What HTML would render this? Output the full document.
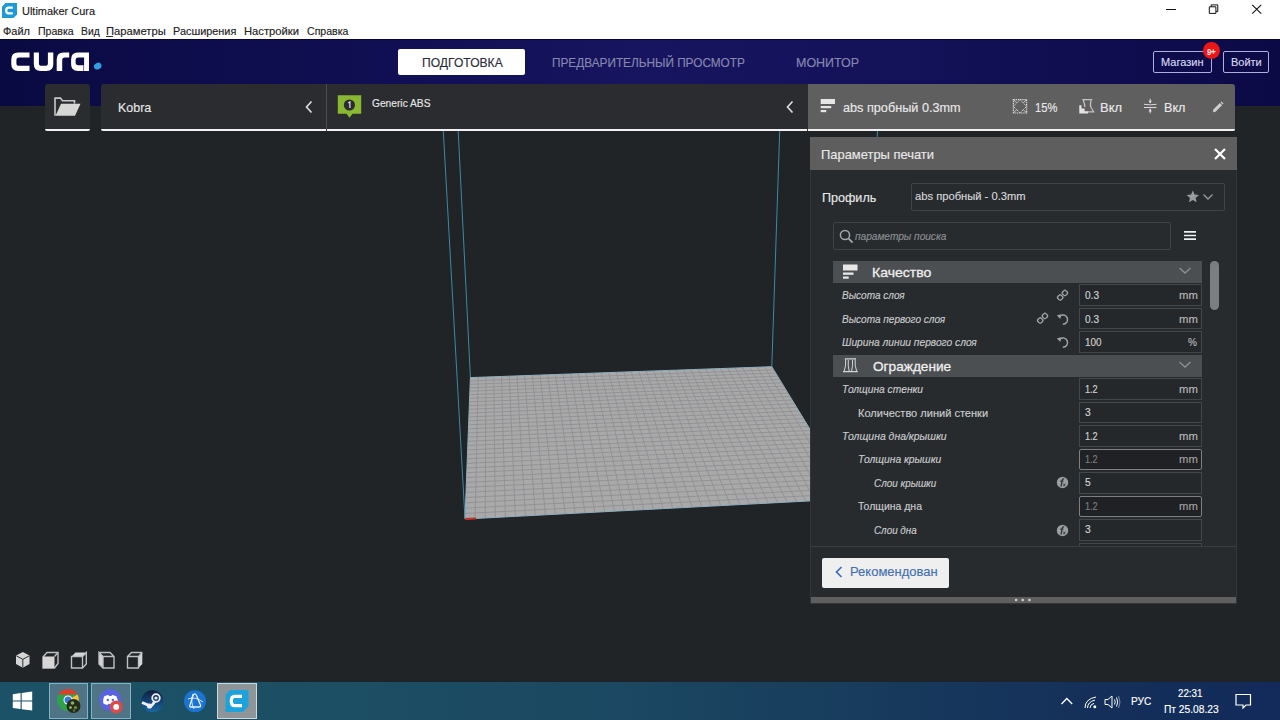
<!DOCTYPE html>
<html><head><meta charset="utf-8">
<style>
*{margin:0;padding:0;box-sizing:border-box}
html,body{width:1280px;height:720px;overflow:hidden;background:#212528;font-family:"Liberation Sans",sans-serif}
.abs{position:absolute}
.t{position:absolute;white-space:nowrap;line-height:1;transform-origin:0 0;-webkit-text-stroke:0.15px currentColor}
.sec{position:absolute;top:84px;height:47px;background:#2a2c2f;border-radius:3px 3px 0 0}
.field{position:absolute;left:1078.6px;width:123.4px;height:22px;background:#25282b;border:1px solid #44474a}
.field.dis{background:#1f2124;border-color:#7d7f82;border-radius:2px}
</style></head><body>
<!-- title + menu -->
<div class="abs" style="left:0;top:0;width:1280px;height:39px;background:#fff"></div>
<svg class="abs" style="left:2px;top:3px" width="15" height="15" viewBox="0 0 15 15"><path d="M3.5 0H15V11.5L11.5 15H0V3.5Z" fill="#1d9ad6"/><path d="M10.8 4.6H6.6Q4.2 4.6 4.2 7.5Q4.2 10.4 6.6 10.4H10.8" fill="none" stroke="#fff" stroke-width="2.3"/></svg>
<div class="abs" style="left:106px;top:36px;width:7px;height:1px;background:#333"></div>
<svg class="abs" style="left:1150px;top:0" width="130" height="21"><path d="M16 9.5H26" stroke="#111" stroke-width="1"/><path d="M59.3 6.8h6.6v6.6h-6.6z M61.2 6.8v-1.9h6.6v6.6h-1.9" fill="none" stroke="#111" stroke-width="1"/><path d="M102.2 4.8l9 8.8 M111.2 4.8l-9 8.8" stroke="#111" stroke-width="1.1"/></svg>
<!-- header -->
<div class="abs" style="left:0;top:39px;width:1280px;height:67px;background:linear-gradient(90deg,#0a0a42 0%,#0d0c4a 12%,#100f53 30%,#17155f 50%,#141259 68%,#0f0d4f 88%,#0b0a45 100%)"></div>
<div class="abs" style="left:0;top:39px;width:1280px;height:1px;background:#050530"></div>
<!-- cura logo -->
<svg class="abs" style="left:0;top:0" width="110" height="80" viewBox="0 0 110 80">
<g fill="#fff" fill-rule="evenodd">
<path d="M29.5 52.4H18Q11.3 52.4 11.3 59.2V64.2Q11.3 70.9 18 70.9H29.5V65.8H19Q16.4 65.8 16.4 63.2V60.1Q16.4 57.4 19 57.4H29.5Z"/>
<path d="M33.8 52.4H38.9V63.2Q38.9 65.8 41.5 65.8H45.3Q47.9 65.8 47.9 63.2V52.4H53.3V64.2Q53.3 70.9 46.5 70.9H40.6Q33.8 70.9 33.8 64.2Z"/>
<path d="M56.7 70.9V59.2Q56.7 52.4 63.4 52.4H69.2V57.4H64.8Q62.2 57.4 62.2 60V70.9Z"/>
<path d="M77.8 52.4H89V70.9H77.8Q71.1 70.9 71.1 64.2V59.2Q71.1 52.4 77.8 52.4Z M84.1 57.4H78.3Q75.6 57.4 75.6 60.1V62.6Q75.6 65.3 78.3 65.3H84.1Z"/>
</g>
<path d="M83.6 65.3V70.9" stroke="#0d0c4a" stroke-width="0.6"/>
<ellipse cx="97.7" cy="66.1" rx="3.9" ry="3.2" transform="rotate(-25 97.7 66.1)" fill="#2f9fe2"/>
</svg>
<!-- tabs -->
<div class="abs" style="left:398px;top:49px;width:127px;height:26px;background:#fff;border-radius:2px"></div>
<div class="abs" style="left:1153px;top:50.5px;width:58.5px;height:22.5px;border:1.5px solid #aeaee0;border-radius:2px"></div>
<div class="abs" style="left:1222.8px;top:50.5px;width:46px;height:22.5px;border:1.5px solid #aeaee0;border-radius:2px"></div>
<div class="abs" style="left:1203.2px;top:42.3px;width:16.8px;height:16.8px;background:#ec1616;border-radius:50%"></div>
<!-- viewport -->
<div class="abs" style="left:0;top:106px;width:1280px;height:576px;background:#202427"></div>
<svg class="abs" style="left:0;top:0" width="1280" height="720" viewBox="0 0 1280 720">
<g stroke="#3d8aa6" stroke-width="1" fill="none">
<line x1="443.3" y1="131" x2="465" y2="519"/>
<line x1="458.2" y1="131" x2="470.4" y2="377.6"/>
<line x1="779.7" y1="131" x2="771.8" y2="366.7"/>
<line x1="877.6" y1="131" x2="852.4" y2="498.7"/>
</g>
<polygon points="470.4,377.6 771.8,366.7 852.4,498.7 465.0,519.0" fill="#a9a9aa" stroke="#8fb0c0" stroke-width="1"/>
<g stroke="#8e8e90" stroke-width="0.8">
<line x1="478.20" y1="377.32" x2="475.12" y2="518.47"/>
<line x1="485.98" y1="377.04" x2="485.23" y2="517.94"/>
<line x1="493.75" y1="376.76" x2="495.30" y2="517.41"/>
<line x1="501.51" y1="376.47" x2="505.36" y2="516.89"/>
<line x1="509.25" y1="376.19" x2="515.39" y2="516.36"/>
<line x1="516.98" y1="375.92" x2="525.40" y2="515.84"/>
<line x1="524.70" y1="375.64" x2="535.38" y2="515.31"/>
<line x1="532.40" y1="375.36" x2="545.34" y2="514.79"/>
<line x1="540.09" y1="375.08" x2="555.28" y2="514.27"/>
<line x1="547.76" y1="374.80" x2="565.20" y2="513.75"/>
<line x1="555.42" y1="374.53" x2="575.09" y2="513.23"/>
<line x1="563.07" y1="374.25" x2="584.96" y2="512.71"/>
<line x1="570.70" y1="373.97" x2="594.81" y2="512.20"/>
<line x1="578.32" y1="373.70" x2="604.63" y2="511.68"/>
<line x1="585.93" y1="373.42" x2="614.44" y2="511.17"/>
<line x1="593.52" y1="373.15" x2="624.22" y2="510.66"/>
<line x1="601.10" y1="372.87" x2="633.97" y2="510.15"/>
<line x1="608.67" y1="372.60" x2="643.71" y2="509.64"/>
<line x1="616.22" y1="372.33" x2="653.42" y2="509.13"/>
<line x1="623.76" y1="372.05" x2="663.11" y2="508.62"/>
<line x1="631.29" y1="371.78" x2="672.78" y2="508.11"/>
<line x1="638.80" y1="371.51" x2="682.43" y2="507.61"/>
<line x1="646.30" y1="371.24" x2="692.05" y2="507.10"/>
<line x1="653.78" y1="370.97" x2="701.66" y2="506.60"/>
<line x1="661.26" y1="370.70" x2="711.24" y2="506.10"/>
<line x1="668.72" y1="370.43" x2="720.80" y2="505.60"/>
<line x1="676.16" y1="370.16" x2="730.34" y2="505.10"/>
<line x1="683.60" y1="369.89" x2="739.85" y2="504.60"/>
<line x1="691.02" y1="369.62" x2="749.35" y2="504.10"/>
<line x1="698.43" y1="369.35" x2="758.82" y2="503.60"/>
<line x1="705.82" y1="369.09" x2="768.27" y2="503.11"/>
<line x1="713.20" y1="368.82" x2="777.71" y2="502.61"/>
<line x1="720.57" y1="368.55" x2="787.12" y2="502.12"/>
<line x1="727.93" y1="368.29" x2="796.50" y2="501.63"/>
<line x1="735.27" y1="368.02" x2="805.87" y2="501.14"/>
<line x1="742.60" y1="367.76" x2="815.22" y2="500.65"/>
<line x1="749.92" y1="367.49" x2="824.55" y2="500.16"/>
<line x1="757.23" y1="367.23" x2="833.85" y2="499.67"/>
<line x1="764.52" y1="366.96" x2="843.14" y2="499.19"/>
<line x1="470.27" y1="380.92" x2="773.71" y2="369.84"/>
<line x1="470.14" y1="384.30" x2="775.65" y2="373.01"/>
<line x1="470.01" y1="387.72" x2="777.62" y2="376.23"/>
<line x1="469.88" y1="391.18" x2="779.62" y2="379.50"/>
<line x1="469.75" y1="394.70" x2="781.64" y2="382.81"/>
<line x1="469.61" y1="398.27" x2="783.69" y2="386.17"/>
<line x1="469.47" y1="401.89" x2="785.77" y2="389.57"/>
<line x1="469.33" y1="405.57" x2="787.87" y2="393.03"/>
<line x1="469.19" y1="409.30" x2="790.01" y2="396.53"/>
<line x1="469.04" y1="413.08" x2="792.18" y2="400.08"/>
<line x1="468.90" y1="416.93" x2="794.38" y2="403.68"/>
<line x1="468.75" y1="420.83" x2="796.62" y2="407.34"/>
<line x1="468.60" y1="424.79" x2="798.88" y2="411.05"/>
<line x1="468.44" y1="428.81" x2="801.18" y2="414.82"/>
<line x1="468.29" y1="432.89" x2="803.51" y2="418.64"/>
<line x1="468.13" y1="437.04" x2="805.88" y2="422.52"/>
<line x1="467.97" y1="441.25" x2="808.29" y2="426.46"/>
<line x1="467.81" y1="445.53" x2="810.73" y2="430.45"/>
<line x1="467.64" y1="449.88" x2="813.21" y2="434.51"/>
<line x1="467.47" y1="454.30" x2="815.72" y2="438.64"/>
<line x1="467.30" y1="458.79" x2="818.28" y2="442.82"/>
<line x1="467.13" y1="463.35" x2="820.88" y2="447.08"/>
<line x1="466.95" y1="467.99" x2="823.52" y2="451.40"/>
<line x1="466.77" y1="472.71" x2="826.20" y2="455.79"/>
<line x1="466.58" y1="477.51" x2="828.92" y2="460.25"/>
<line x1="466.40" y1="482.39" x2="831.69" y2="464.78"/>
<line x1="466.21" y1="487.35" x2="834.50" y2="469.39"/>
<line x1="466.02" y1="492.40" x2="837.36" y2="474.07"/>
<line x1="465.82" y1="497.53" x2="840.27" y2="478.83"/>
<line x1="465.62" y1="502.76" x2="843.23" y2="483.67"/>
<line x1="465.42" y1="508.08" x2="846.23" y2="488.60"/>
<line x1="465.21" y1="513.49" x2="849.29" y2="493.61"/>
</g>
<line x1="465" y1="519" x2="476" y2="518.4" stroke="#c0302a" stroke-width="2"/>
</svg>
<!-- top bar -->
<div class="sec" style="left:45px;width:45px"></div>
<div class="sec" style="left:101px;width:225.5px;border-radius:3px 0 0 0"></div>
<div class="sec" style="left:327px;width:480.5px;border-radius:0"></div>
<div class="sec" style="left:807.5px;width:427.5px;background:#5f5f5f;border-radius:0 3px 0 0"></div>
<div class="abs" style="left:326px;top:84px;width:1px;height:47px;background:#4a4c4f"></div>
<div class="abs" style="left:45px;top:128.5px;width:45px;height:2.5px;background:#f2f2f2;border-radius:0 0 3px 3px"></div>
<div class="abs" style="left:101px;top:128.5px;width:1134px;height:2.5px;background:#f2f2f2;border-radius:0 0 3px 3px"></div>
<div class="abs" style="left:326px;top:128.5px;width:1px;height:2.5px;background:#3a3c3f"></div>
<div class="abs" style="left:807px;top:128.5px;width:1px;height:2.5px;background:#3a3c3f"></div>
<!-- folder icon -->
<svg class="abs" style="left:54px;top:96.5px" width="28" height="23.5" viewBox="0 0 28 22" preserveAspectRatio="none"><path d="M1 17.5V1H6.5L8.5 3.5H20.5V6" fill="none" stroke="#c8c8c8" stroke-width="1.6"/><path d="M1.5 17.5L7 6.3H26.5L21 17.5Z" fill="#d6d6d6"/></svg>
<!-- chevrons -->
<svg class="abs" style="left:304px;top:100px" width="10" height="14"><path d="M7.5 1.5L2.5 7L7.5 12.5" fill="none" stroke="#e0e0e0" stroke-width="1.6"/></svg>
<svg class="abs" style="left:785px;top:100px" width="10" height="14"><path d="M7.5 1.5L2.5 7L7.5 12.5" fill="none" stroke="#e0e0e0" stroke-width="1.6"/></svg>
<!-- green badge -->
<svg class="abs" style="left:337px;top:95px" width="25" height="23" viewBox="0 0 25 23"><path d="M0.8 0.3H24.2V18.7H15.5L12.5 22.7L9.5 18.7H0.8Z" fill="#8ab832"/><circle cx="12.4" cy="10" r="5.6" fill="#2a2c2f"/><path d="M11.2 8L12.9 7V13" fill="none" stroke="#d8d8d8" stroke-width="1.3"/></svg>
<!-- quality icon -->
<svg class="abs" style="left:820px;top:98px" width="16" height="16"><rect x="0.7" y="1" width="14.3" height="5" fill="#e6e6e6"/><rect x="0.7" y="8" width="10.5" height="2.2" fill="#e6e6e6"/><rect x="0.7" y="12" width="5.5" height="2.2" fill="#e6e6e6"/></svg>
<!-- infill icon -->
<svg class="abs" style="left:0;top:0" width="1280" height="130" viewBox="0 0 1280 130">
<g fill="none" stroke="#d4d4d4">
<rect x="1013.4" y="99.6" width="13.2" height="13.4" stroke-width="1.2" stroke-dasharray="1.4 0.8"/>
<path d="M1013.4 106.3L1020 99.6L1026.6 106.3L1020 113Z" stroke-width="1" stroke-dasharray="1.4 0.8"/>
<path d="M1013.4 99.6L1016.7 103 M1026.6 99.6L1023.3 103 M1013.4 113L1016.7 109.6 M1026.6 113L1023.3 109.6" stroke-width="0.9"/>
</g>
<path d="M1082.2 99.6H1092.2 M1083.6 100V101.5Q1085 104 1084.8 107" fill="none" stroke="#c4c4c4" stroke-width="1.3"/>
<path d="M1091.2 100.2Q1089.6 104.5 1091 107.5Q1093 110.5 1093.6 111.8H1087.5" fill="none" stroke="#c4c4c4" stroke-width="1.2"/>
<path d="M1079.3 113.6V105.2H1081.5V108.6H1084.6V111.2H1088V113.6Z" fill="#e4e4e4"/>
<g fill="none" stroke="#d8d8d8">
<path d="M1144 104.3Q1150.2 105.3 1156.5 104.3" stroke-width="1"/>
<path d="M1144 107.5H1156.5" stroke-width="1.1"/>
<path d="M1150.2 98.8V103" stroke-width="1"/>
<path d="M1150.2 108.8V113.3" stroke-width="1"/>
</g>
<path d="M1148.6 100.8H1151.8L1150.2 103.6Z M1148.6 111.4H1151.8L1150.2 108.6Z" fill="#e0e0e0"/>
</svg>
<!-- pencil -->
<svg class="abs" style="left:1212px;top:101px" width="12" height="12" viewBox="0 0 12 12"><path d="M1 11.2L1.4 8.6L7.9 2.1L10 4.2L3.5 10.7Z" fill="#d0d0d0"/><path d="M8.6 1.4L9.5 0.6L11.5 2.6L10.7 3.5Z" fill="#d0d0d0"/></svg>

<!-- panel -->
<div class="abs" style="left:810px;top:137px;width:426.5px;height:466.5px;background:#272b2e;border:1px solid #34373a"></div>
<div class="abs" style="left:810px;top:137px;width:426.5px;height:33px;background:#5e5e5e"></div>
<svg class="abs" style="left:1213px;top:147px" width="14" height="14"><path d="M2 2L12 12 M12 2L2 12" stroke="#fff" stroke-width="2.2"/></svg>
<div class="abs" style="left:910.5px;top:183.3px;width:314px;height:27.5px;border:1px solid #414447;border-radius:2px"></div>
<svg class="abs" style="left:1186px;top:190px" width="14" height="13" viewBox="0 0 14 13"><path d="M6.8 0.5L8.5 4.6L13 5L9.6 7.9L10.7 12.3L6.8 10L2.9 12.3L4 7.9L0.6 5L5.1 4.6Z" fill="#9a9b9d"/></svg>
<svg class="abs" style="left:1202px;top:193px" width="13" height="9"><path d="M1.5 1.5L6 6L10.5 1.5" fill="none" stroke="#9a9a9a" stroke-width="1.3"/></svg>
<div class="abs" style="left:833.3px;top:221.5px;width:337.5px;height:28px;border:1px solid #414447;border-radius:2px"></div>
<svg class="abs" style="left:839px;top:229px" width="16" height="16" viewBox="0 0 16 16"><circle cx="6" cy="6" r="4.6" fill="none" stroke="#a6a7a9" stroke-width="1.5"/><path d="M9.4 9.4L13.6 13.6" stroke="#a6a7a9" stroke-width="1.8"/></svg>
<svg class="abs" style="left:1183px;top:229px" width="14" height="13"><path d="M1 2.8H13 M1 6.5H13 M1 10.2H13" stroke="#efefef" stroke-width="1.7"/></svg>
<!-- settings list -->
<div class="abs" style="left:833px;top:260.5px;width:369px;height:22.5px;background:#4c4f52"></div>
<div class="abs" style="left:833px;top:354.5px;width:369px;height:22.5px;background:#4c4f52"></div>
<svg class="abs" style="left:842px;top:263px" width="17" height="17"><rect x="1" y="1.5" width="14.5" height="6" fill="#e8e8e8"/><rect x="1" y="9.5" width="10.5" height="2.3" fill="#e8e8e8"/><rect x="1" y="13.5" width="5.7" height="2.2" fill="#e8e8e8"/></svg>
<svg class="abs" style="left:0;top:0" width="870" height="380" viewBox="0 0 870 380"><g fill="none" stroke="#d4d4d4"><path d="M844.8 358.8H856 M843 371.6H857.8" stroke-width="1.3"/><path d="M845.6 359.3Q846.3 365 844.2 371.2 M848.3 360Q847.8 366 849.2 371.2 M855.2 359.3Q854.5 365 856.6 371.2 M852.5 360Q853 366 851.6 371.2" stroke-width="1"/></g></svg>
<svg class="abs" style="left:1178px;top:266px" width="14" height="10"><path d="M1.5 2L7 7L12.5 2" fill="none" stroke="#8e9092" stroke-width="1.3"/></svg>
<svg class="abs" style="left:1178px;top:360px" width="14" height="10"><path d="M1.5 2L7 7L12.5 2" fill="none" stroke="#8e9092" stroke-width="1.3"/></svg>
<div class="abs" style="left:1209.5px;top:261px;width:9px;height:49px;background:#7b7d80;border-radius:4.5px"></div>
<!-- fields -->
<div class="field" style="top:284.3px;height:21.3px"></div>
<div class="field" style="top:307.8px;height:21.3px"></div>
<div class="field" style="top:331.3px;height:21.3px"></div>
<div class="field" style="top:378.3px;height:21.3px"></div>
<div class="field" style="top:401.8px;height:21.3px"></div>
<div class="field" style="top:425.3px;height:21.3px"></div>
<div class="field dis" style="top:448.8px;height:21.3px"></div>
<div class="field" style="top:472.3px;height:21.3px"></div>
<div class="field dis" style="top:495.8px;height:21.3px"></div>
<div class="field" style="top:519.3px;height:21.3px"></div>
<div class="field" style="top:542.8px;height:3.5px;border-bottom:none"></div>
<!-- row icons -->
<svg class="abs" style="left:1056px;top:289px" width="13" height="13" viewBox="0 0 13 13"><rect x="1.9" y="6.2" width="4.6" height="4.6" rx="1.6" transform="rotate(45 4.2 8.5)" fill="none" stroke="#a0a1a3" stroke-width="1.4"/><rect x="6.6" y="1.7" width="4.6" height="4.6" rx="1.6" transform="rotate(45 8.9 4)" fill="none" stroke="#a0a1a3" stroke-width="1.4"/></svg>
<svg class="abs" style="left:1036px;top:312px" width="13" height="13" viewBox="0 0 13 13"><rect x="1.9" y="6.2" width="4.6" height="4.6" rx="1.6" transform="rotate(45 4.2 8.5)" fill="none" stroke="#a0a1a3" stroke-width="1.4"/><rect x="6.6" y="1.7" width="4.6" height="4.6" rx="1.6" transform="rotate(45 8.9 4)" fill="none" stroke="#a0a1a3" stroke-width="1.4"/></svg>
<svg class="abs" style="left:1056px;top:312px" width="14" height="14" viewBox="0 0 14 14"><path d="M3.6 4.2A4.7 4.7 0 1 1 6.8 12.3" fill="none" stroke="#a0a1a3" stroke-width="1.5"/><path d="M0.8 3.2L5.6 2.2L4.2 7Z" fill="#a0a1a3"/></svg>
<svg class="abs" style="left:1056px;top:335px" width="14" height="14" viewBox="0 0 14 14"><path d="M3.6 4.2A4.7 4.7 0 1 1 6.8 12.3" fill="none" stroke="#a0a1a3" stroke-width="1.5"/><path d="M0.8 3.2L5.6 2.2L4.2 7Z" fill="#a0a1a3"/></svg>
<svg class="abs" style="left:1056px;top:476px" width="13" height="13" viewBox="0 0 13 13"><circle cx="6.5" cy="6.5" r="5.7" fill="#9c9d9f"/><path d="M8.2 2.9Q6.6 2.4 6.2 4.2L5 10.6 M4.4 5.2H7.4" fill="none" stroke="#2e3033" stroke-width="1.2"/><path d="M7.3 7.6L9.3 10.2 M9.3 7.6L7.3 10.2" stroke="#2e3033" stroke-width="0.9"/></svg>
<svg class="abs" style="left:1056px;top:523.5px" width="13" height="13" viewBox="0 0 13 13"><circle cx="6.5" cy="6.5" r="5.7" fill="#9c9d9f"/><path d="M8.2 2.9Q6.6 2.4 6.2 4.2L5 10.6 M4.4 5.2H7.4" fill="none" stroke="#2e3033" stroke-width="1.2"/><path d="M7.3 7.6L9.3 10.2 M9.3 7.6L7.3 10.2" stroke="#2e3033" stroke-width="0.9"/></svg>
<!-- bottom -->
<div class="abs" style="left:811px;top:545.5px;width:424.5px;height:1px;background:#3b3e41"></div>
<div class="abs" style="left:822px;top:558px;width:126.5px;height:30px;background:#efeff0;border-radius:2px"></div>
<svg class="abs" style="left:833px;top:565px" width="12" height="14"><path d="M8.5 2L3.5 7L8.5 12" fill="none" stroke="#3f6fb5" stroke-width="1.7"/></svg>
<div class="abs" style="left:811px;top:597px;width:424.5px;height:6px;background:#5f5f5f"></div>
<svg class="abs" style="left:1010px;top:595px" width="26" height="10"><circle cx="6.1" cy="5" r="1.3" fill="#d0d0d0"/><circle cx="12.7" cy="5" r="1.3" fill="#d0d0d0"/><circle cx="19.4" cy="5" r="1.3" fill="#d0d0d0"/></svg>
<!-- view cube icons -->
<svg class="abs" style="left:14px;top:651px" width="132" height="18" viewBox="0 0 132 18">
<g transform="translate(1.5,0.5)"><path d="M7.3 0.5L14 4V12.5L7.3 16.3L0.5 12.5V4Z" fill="#d6d6d6"/><path d="M0.8 4.3L7.3 7.8L13.8 4.3 M7.3 7.8V16" fill="none" stroke="#2a2c2f" stroke-width="1"/></g>
<g transform="translate(28.5,0.5)"><path d="M0.5 5.5L4.5 1H15.5V12L12 16.5H0.5Z" fill="none" stroke="#bfbfbf" stroke-width="1.4"/><rect x="0.5" y="5" width="11.5" height="11.5" fill="#d6d6d6"/><path d="M12 5L15.5 1" stroke="#bfbfbf" stroke-width="1.4"/></g>
<g transform="translate(57,0.5)"><path d="M0.5 5L4.5 1H15.3L11.5 5Z" fill="#d6d6d6"/><path d="M0.5 5H11.5V16.5H0.5Z M11.5 5L15.3 1V12.5L11.5 16.5" fill="none" stroke="#bfbfbf" stroke-width="1.4"/></g>
<g transform="translate(84.5,0.5)"><path d="M0.5 1L4.5 5V16.5L0.5 12.5Z" fill="#d6d6d6"/><path d="M0.5 1H11.5L15.5 5V16.5H4.5V5H15.5 M4.5 5L0.5 1V12.5L4.5 16.5" fill="none" stroke="#bfbfbf" stroke-width="1.4"/></g>
<g transform="translate(113,0.5)"><path d="M11.5 5L15.3 1V12.5L11.5 16.5Z" fill="#d6d6d6"/><path d="M0.5 5L4.5 1H15.3 M0.5 5H11.5V16.5H0.5Z M11.5 5L15.3 1" fill="none" stroke="#bfbfbf" stroke-width="1.4"/></g>
</svg>
<!-- taskbar -->
<div class="abs" style="left:0;top:682px;width:1280px;height:38px;background:linear-gradient(90deg,#1c5267 0%,#1c4f64 23%,#1b4862 48%,#173a5c 70%,#14305a 85%,#122a5a 100%)"></div>
<svg class="abs" style="left:12px;top:691px" width="21" height="21" viewBox="0 0 21 21"><path d="M0.8 3.2L8.6 2.1V9.5H0.8Z M9.7 1.9L20.2 0.5V9.5H9.7Z M0.8 10.6H8.6V18L0.8 16.9Z M9.7 10.6H20.2V19.6L9.7 18.2Z" fill="#fff"/></svg>
<div class="abs" style="left:48.8px;top:683.3px;width:39.5px;height:35.5px;background:#4f7485;border:1px solid #8bb0bf"></div>
<div class="abs" style="left:91px;top:683.3px;width:39.5px;height:35.5px;background:#4f7485;border:1px solid #8bb0bf"></div>
<div class="abs" style="left:217.3px;top:683.3px;width:39.5px;height:35.5px;background:#8d9598;border:1.5px solid #d0d8da"></div>
<svg class="abs" style="left:55px;top:688px" width="28" height="26" viewBox="0 0 28 26">
<circle cx="13" cy="12" r="11" fill="#2ea24a"/><path d="M13 1A11 11 0 0 1 22.5 6.5H13Z" fill="#dc3d2d"/><path d="M3.5 6.5A11 11 0 0 1 13 1V6.5Z" fill="#dc3d2d"/><path d="M22.5 6.5A11 11 0 0 1 19 21L13 12Z" fill="#f6c33a"/><circle cx="13" cy="12" r="4.5" fill="#fff"/><circle cx="13" cy="12" r="3.5" fill="#3b78d8"/>
<circle cx="18.5" cy="18" r="7" fill="#222c18"/><circle cx="17.5" cy="15" r="1.8" fill="#8fb060"/><circle cx="20.5" cy="19.5" r="1.6" fill="#6f9048"/><circle cx="15.5" cy="19.5" r="1.3" fill="#a8c878"/><circle cx="19" cy="22.5" r="1.2" fill="#557a38"/>
</svg>
<svg class="abs" style="left:98px;top:688px" width="27" height="27" viewBox="0 0 27 27"><circle cx="12.2" cy="12" r="11" fill="#5962e0"/><path d="M6 8.6Q8.5 6.8 10.5 7L11 8H13.5L14 7Q16 6.8 18.5 8.6Q20 11.5 19.8 15.2Q18 16.8 16 17L15.3 15.8Q13 16.5 10.2 15.8L9.5 17Q7.5 16.8 5.2 15.2Q5 11.5 6 8.6Z" fill="#fff"/><circle cx="9.8" cy="12" r="1.2" fill="#5962e0"/><circle cx="14.8" cy="12" r="1.2" fill="#5962e0"/><circle cx="18.2" cy="18.9" r="6.5" fill="#dc4a4a"/><circle cx="18.2" cy="18.9" r="2.9" fill="#fff"/></svg>
<svg class="abs" style="left:141px;top:689.5px" width="23" height="23" viewBox="0 0 23 23"><defs><linearGradient id="stg" x1="0" y1="0" x2="0" y2="1"><stop offset="0" stop-color="#111d3f"/><stop offset="1" stop-color="#1768a5"/></linearGradient></defs><circle cx="11.3" cy="11.3" r="11" fill="url(#stg)"/><circle cx="15" cy="8" r="3.8" fill="none" stroke="#eef" stroke-width="1.8"/><circle cx="15" cy="8" r="1.6" fill="#eef"/><path d="M1 12.5L8 15.5Q10 17 12 14L14 11" fill="none" stroke="#eef" stroke-width="2.8"/><circle cx="8.5" cy="16" r="2.6" fill="#eef"/></svg>
<svg class="abs" style="left:184px;top:689.5px" width="23" height="23" viewBox="0 0 23 23"><circle cx="11" cy="11.3" r="11" fill="#1b74d2"/><path d="M9.5 4.5Q11.5 3 12.5 5.5L16.5 15Q17 17 15 17H7Q5 17 6 15Z" fill="none" stroke="#e8f2ff" stroke-width="1.3"/><path d="M4 9Q11 6 19 12 M9 4Q6 11 10 19" fill="none" stroke="#e8f2ff" stroke-width="0.9"/></svg>
<svg class="abs" style="left:225px;top:690px" width="24" height="22" viewBox="0 0 24 22"><path d="M5 0H23.5V16L18 22H0.5V5Z" fill="#1ea2dc"/><path d="M17 6.3H9.5Q6.3 6.3 6.3 11Q6.3 15.7 9.5 15.7H17" fill="none" stroke="#fff" stroke-width="3.3"/></svg>
<svg class="abs" style="left:1060px;top:696px" width="14" height="10"><path d="M1.5 8L6.8 2.5L12.2 8" fill="none" stroke="#fff" stroke-width="1.3"/></svg>
<svg class="abs" style="left:1084px;top:695px" width="14" height="14" viewBox="0 0 14 14"><path d="M1 13Q1 4 12 2 M3.5 13Q3.5 7 11 5 M6 13Q6 9.5 10 8.3" fill="none" stroke="#fff" stroke-width="1"/><circle cx="10.8" cy="11.8" r="1.5" fill="#fff"/></svg>
<svg class="abs" style="left:1104px;top:695px" width="17" height="14" viewBox="0 0 17 14"><path d="M1 4.5H4L8 1V13L4 9.5H1Z" fill="none" stroke="#fff" stroke-width="1"/><path d="M10.5 4.5Q12 7 10.5 9.5 M12.5 2.5Q15 7 12.5 11.5" fill="none" stroke="#fff" stroke-width="1"/><path d="M14.5 1Q17.5 7 14.5 13" fill="none" stroke="#9ab" stroke-width="0.8"/></svg>
<svg class="abs" style="left:1235px;top:693px" width="17" height="17" viewBox="0 0 17 17"><path d="M1 1.5H15.5V12H11L8 15L8 12H1Z" fill="none" stroke="#fff" stroke-width="1.2"/></svg>

<div class="t" style="left:22.10px;top:6.21px;font-size:10.58px;color:#1a1a1a;font-style:normal;font-weight:normal;transform:scaleX(1.0347);">Ultimaker Cura</div>
<div class="t" style="left:3.30px;top:25.68px;font-size:10.72px;color:#222;font-style:normal;font-weight:normal;transform:scaleX(1.0231);">Файл</div>
<div class="t" style="left:37.90px;top:25.68px;font-size:10.72px;color:#222;font-style:normal;font-weight:normal;transform:scaleX(0.9849);">Правка</div>
<div class="t" style="left:80.60px;top:25.68px;font-size:10.72px;color:#222;font-style:normal;font-weight:normal;transform:scaleX(0.9634);">Вид</div>
<div class="t" style="left:106.00px;top:25.68px;font-size:10.72px;color:#222;font-style:normal;font-weight:normal;transform:scaleX(1.0455);">Параметры</div>
<div class="t" style="left:172.50px;top:25.68px;font-size:10.72px;color:#222;font-style:normal;font-weight:normal;transform:scaleX(1.0155);">Расширения</div>
<div class="t" style="left:244.00px;top:25.68px;font-size:10.72px;color:#222;font-style:normal;font-weight:normal;transform:scaleX(1.0462);">Настройки</div>
<div class="t" style="left:306.50px;top:25.68px;font-size:10.72px;color:#222;font-style:normal;font-weight:normal;transform:scaleX(0.9861);">Справка</div>
<div class="t" style="left:421.50px;top:56.58px;font-size:12.03px;color:#2c2c38;font-style:normal;font-weight:normal;transform:scaleX(1.0063);">ПОДГОТОВКА</div>
<div class="t" style="left:552.34px;top:56.63px;font-size:12.32px;color:#8787b0;font-style:normal;font-weight:normal;transform:scaleX(0.9579);">ПРЕДВАРИТЕЛЬНЫЙ ПРОСМОТР</div>
<div class="t" style="left:795.79px;top:56.63px;font-size:12.32px;color:#8787b0;font-style:normal;font-weight:normal;transform:scaleX(1.0128);">МОНИТОР</div>
<div class="t" style="left:1161.40px;top:57.34px;font-size:11.59px;color:#d8d8f2;font-style:normal;font-weight:normal;transform:scaleX(0.9510);">Магазин</div>
<div class="t" style="left:1230.70px;top:57.34px;font-size:11.59px;color:#d8d8f2;font-style:normal;font-weight:normal;transform:scaleX(0.9489);">Войти</div>
<div class="t" style="left:1207.30px;top:47.76px;font-size:8.99px;color:#ffdede;font-style:normal;font-weight:bold;transform:scaleX(0.9003);letter-spacing:-0.5px;">9+</div>
<div class="t" style="left:117.84px;top:101.31px;font-size:13.04px;color:#e6e6e6;font-style:normal;font-weight:normal;transform:scaleX(0.9558);">Kobra</div>
<div class="t" style="left:372.30px;top:98.14px;font-size:11.01px;color:#e6e6e6;font-style:normal;font-weight:normal;transform:scaleX(0.9281);">Generic ABS</div>
<div class="t" style="left:843.00px;top:101.86px;font-size:12.75px;color:#e8e8e8;font-style:normal;font-weight:normal;transform:scaleX(0.9940);">abs пробный 0.3mm</div>
<div class="t" style="left:1035.00px;top:101.86px;font-size:12.75px;color:#e8e8e8;font-style:normal;font-weight:normal;transform:scaleX(0.8736);">15%</div>
<div class="t" style="left:1099.98px;top:101.86px;font-size:12.75px;color:#e8e8e8;font-style:normal;font-weight:normal;transform:scaleX(1.0185);">Вкл</div>
<div class="t" style="left:1164.01px;top:101.86px;font-size:12.75px;color:#e8e8e8;font-style:normal;font-weight:normal;transform:scaleX(0.9889);">Вкл</div>
<div class="t" style="left:821.04px;top:148.24px;font-size:13.48px;color:#e8e8e8;font-style:normal;font-weight:normal;transform:scaleX(0.9591);">Параметры печати</div>
<div class="t" style="left:821.54px;top:191.41px;font-size:13.04px;color:#e8e8e8;font-style:normal;font-weight:normal;transform:scaleX(0.9646);">Профиль</div>
<div class="t" style="left:915.20px;top:191.14px;font-size:11.59px;color:#d8d8d8;font-style:normal;font-weight:normal;transform:scaleX(0.9660);">abs пробный - 0.3mm</div>
<div class="t" style="left:855.00px;top:232.08px;font-size:10.14px;color:#8c8e91;font-style:italic;font-weight:normal;transform:scaleX(0.9987);">параметры поиска</div>
<div class="t" style="left:872.32px;top:266.01px;font-size:13.04px;color:#eeeeee;font-style:normal;font-weight:normal;transform:scaleX(1.0752);-webkit-text-stroke:0.3px #eeeeee;">Качество</div>
<div class="t" style="left:873.40px;top:359.81px;font-size:13.04px;color:#eeeeee;font-style:normal;font-weight:normal;transform:scaleX(1.0467);-webkit-text-stroke:0.3px #eeeeee;">Ограждение</div>
<div class="t" style="left:841.90px;top:290.31px;font-size:10.87px;color:#cbcccd;font-style:italic;font-weight:normal;transform:scaleX(0.9230);">Высота слоя</div>
<div class="t" style="left:841.90px;top:313.86px;font-size:10.87px;color:#cbcccd;font-style:italic;font-weight:normal;transform:scaleX(0.9244);">Высота первого слоя</div>
<div class="t" style="left:841.90px;top:337.16px;font-size:10.87px;color:#cbcccd;font-style:italic;font-weight:normal;transform:scaleX(0.9404);">Ширина линии первого слоя</div>
<div class="t" style="left:842.00px;top:384.06px;font-size:10.87px;color:#cbcccd;font-style:italic;font-weight:normal;transform:scaleX(0.9404);">Толщина стенки</div>
<div class="t" style="left:857.50px;top:407.56px;font-size:10.87px;color:#cbcccd;font-style:normal;font-weight:normal;transform:scaleX(1.0160);">Количество линий стенки</div>
<div class="t" style="left:842.00px;top:430.96px;font-size:10.87px;color:#cbcccd;font-style:italic;font-weight:normal;transform:scaleX(0.9610);">Толщина дна/крышки</div>
<div class="t" style="left:857.80px;top:454.46px;font-size:10.87px;color:#cbcccd;font-style:italic;font-weight:normal;transform:scaleX(0.9475);">Толщина крышки</div>
<div class="t" style="left:873.75px;top:477.96px;font-size:10.87px;color:#cbcccd;font-style:italic;font-weight:normal;transform:scaleX(0.9106);">Слои крышки</div>
<div class="t" style="left:857.80px;top:501.36px;font-size:10.87px;color:#cbcccd;font-style:normal;font-weight:normal;transform:scaleX(0.9642);">Толщина дна</div>
<div class="t" style="left:873.75px;top:524.86px;font-size:10.87px;color:#cbcccd;font-style:italic;font-weight:normal;transform:scaleX(0.9067);">Слои дна</div>
<div class="t" style="left:1084.50px;top:290.14px;font-size:11.01px;color:#d2d2d2;font-style:normal;font-weight:normal;transform:scaleX(0.9161);">0.3</div>
<div class="t" style="left:1178.60px;top:290.34px;font-size:11.59px;color:#b8b9ba;font-style:normal;font-weight:normal;transform:scaleX(0.9762);">mm</div>
<div class="t" style="left:1084.50px;top:314.04px;font-size:11.01px;color:#d2d2d2;font-style:normal;font-weight:normal;transform:scaleX(0.9161);">0.3</div>
<div class="t" style="left:1178.60px;top:314.24px;font-size:11.59px;color:#b8b9ba;font-style:normal;font-weight:normal;transform:scaleX(0.9762);">mm</div>
<div class="t" style="left:1084.50px;top:337.04px;font-size:11.01px;color:#d2d2d2;font-style:normal;font-weight:normal;transform:scaleX(0.8994);">100</div>
<div class="t" style="left:1188.00px;top:337.04px;font-size:11.01px;color:#b8b9ba;font-style:normal;font-weight:normal;transform:scaleX(0.9100);">%</div>
<div class="t" style="left:1084.50px;top:383.74px;font-size:11.01px;color:#d2d2d2;font-style:normal;font-weight:normal;transform:scaleX(0.8304);">1.2</div>
<div class="t" style="left:1178.60px;top:383.94px;font-size:11.59px;color:#b8b9ba;font-style:normal;font-weight:normal;transform:scaleX(0.9762);">mm</div>
<div class="t" style="left:1084.50px;top:407.14px;font-size:11.01px;color:#d2d2d2;font-style:normal;font-weight:normal;transform:scaleX(0.9333);">3</div>
<div class="t" style="left:1084.50px;top:430.54px;font-size:11.01px;color:#d2d2d2;font-style:normal;font-weight:normal;transform:scaleX(0.8304);">1.2</div>
<div class="t" style="left:1178.60px;top:430.74px;font-size:11.59px;color:#b8b9ba;font-style:normal;font-weight:normal;transform:scaleX(0.9762);">mm</div>
<div class="t" style="left:1084.50px;top:454.04px;font-size:11.01px;color:#7c7e80;font-style:normal;font-weight:normal;transform:scaleX(0.8304);">1.2</div>
<div class="t" style="left:1178.60px;top:454.24px;font-size:11.59px;color:#a0a1a2;font-style:normal;font-weight:normal;transform:scaleX(0.9762);">mm</div>
<div class="t" style="left:1084.50px;top:477.44px;font-size:11.01px;color:#d2d2d2;font-style:normal;font-weight:normal;transform:scaleX(0.9333);">5</div>
<div class="t" style="left:1084.50px;top:500.94px;font-size:11.01px;color:#7c7e80;font-style:normal;font-weight:normal;transform:scaleX(0.8304);">1.2</div>
<div class="t" style="left:1178.60px;top:501.14px;font-size:11.59px;color:#a0a1a2;font-style:normal;font-weight:normal;transform:scaleX(0.9762);">mm</div>
<div class="t" style="left:1084.50px;top:524.34px;font-size:11.01px;color:#d2d2d2;font-style:normal;font-weight:normal;transform:scaleX(0.9333);">3</div>
<div class="t" style="left:849.58px;top:566.26px;font-size:12.75px;color:#4470b0;font-style:normal;font-weight:normal;transform:scaleX(1.0200);">Рекомендован</div>
<div class="t" style="left:1130.60px;top:695.89px;font-size:11.30px;color:#ffffff;font-style:normal;font-weight:normal;transform:scaleX(0.8948);">РУС</div>
<div class="t" style="left:1177.90px;top:687.56px;font-size:10.87px;color:#ffffff;font-style:normal;font-weight:normal;transform:scaleX(0.8992);">22:31</div>
<div class="t" style="left:1163.50px;top:704.39px;font-size:11.30px;color:#ffffff;font-style:normal;font-weight:normal;transform:scaleX(0.9048);">Пт 25.08.23</div>
</body></html>
